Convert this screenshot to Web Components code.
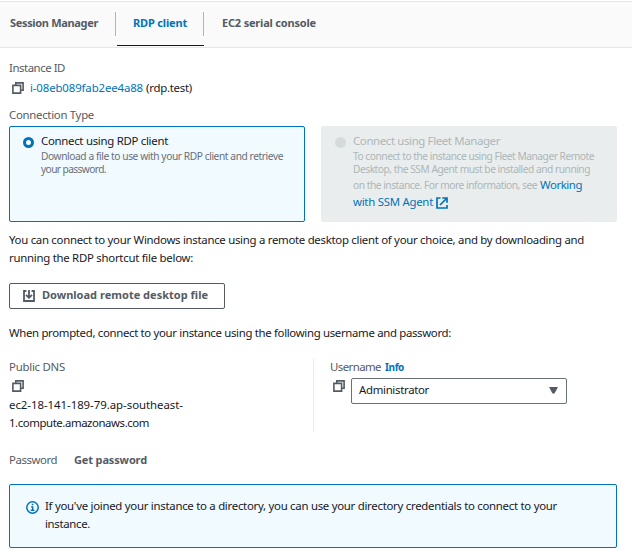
<!DOCTYPE html>
<html lang="en">
<head>
<meta charset="utf-8">
<title>Connect to instance</title>
<style>
html,body{margin:0;background:#fff}
body{width:632px;height:552px;overflow:hidden;font:11.4px/18px "Noto Sans","Open Sans",sans-serif;color:#16191f}
</style>
</head>
<body>
<rdp-page></rdp-page>
<script>
const define = (name, html, ready) => customElements.define(name, class extends HTMLElement {
  connectedCallback() {
    if (!this.shadowRoot) this.attachShadow({mode: 'open'}).innerHTML = html;
    if (ready) ready(this);
  }
});

// One line of text, tracked so that it spans the width in "w".
define('text-line', `<style>
:host{display:block;white-space:nowrap;flex:none;height:18px;line-height:var(--lh,19px)}
:host([muted]){color:#545b64}:host([link]){color:#0073bb}:host([bold]){font-weight:700;font-size:11px}
:host([small]){font-size:10.2px;height:13px;line-height:14px;color:#687078}
</style><span><slot></slot></span>`, el => {
  const span = el.shadowRoot.querySelector('span');
  const w = +el.getAttribute('w');
  el.style.width = w + 'px';
  const n = el.textContent.length;
  span.style.letterSpacing = ((w - span.getBoundingClientRect().width) / n).toFixed(4) + 'px';
});

define('copy-icon', `<style>:host{display:block;flex:none;width:12px;height:12px}svg{display:block}</style>
<svg width="12" height="12" fill="none" stroke="#545b64" stroke-width="1.6"><path d="M3.8 3.3V.9h7.3v7.3H8.7"/><path d="M.9 3.4h7.7v7.7H.9z"/></svg>`);

define('external-icon', `<style>:host{display:block;flex:none;width:12px;height:12px}svg{display:block}</style>
<svg width="12" height="12" fill="none" stroke="#0073bb" stroke-width="1.7"><path d="M4.5 1H1v10h10V8M6.2 1H11v4.8M11 1L4 8"/></svg>`);

define('download-icon', `<style>:host{display:block;flex:none;width:12px;height:12px}svg{display:block}</style>
<svg width="12" height="12" fill="none" stroke="#545b64" stroke-width="1.8"><path d="M3.4 1H1v10h10V1H8.6M6 0v7.5M3 4.8l3 3 3-3"/></svg>`);

define('info-icon', `<style>:host{display:block;flex:none;width:13px;height:13px}svg{display:block}</style>
<svg width="13" height="13" fill="none" stroke="#0073bb" stroke-width="1.5"><circle cx="6.5" cy="6.5" r="5.7"/><path d="M5 5.9h1.7v3.5M4.7 9.3h3.7M5.8 3.5h1.5" stroke-width="1.4"/></svg>`);

define('tab-bar', `<style>
:host{--lh:17px;display:flex;box-sizing:border-box;height:47px;margin-top:1px;border-top:1px solid #e4e7e7;border-bottom:1px solid #e4e7e7;background:#fafafa}
i{width:1px;height:24px;margin-top:10px;background:#aab7b8}
.a{padding:12px 17px 0 10px}.b{box-sizing:border-box;width:87px;height:44px;margin-left:1px;padding:12px 0 0 16px;border-bottom:1px solid #16191f}
.c{padding:12px 0 0 18px}i.r{margin-left:-1px}
</style>
<div class="a"><text-line bold muted w="88">Session Manager</text-line></div><i></i>
<div class="b"><text-line bold link w="54">RDP client</text-line></div><i class="r"></i>
<div class="c"><text-line bold muted w="94">EC2 serial console</text-line></div>`);

define('option-tile', `<style>
:host{display:flex;box-sizing:border-box;width:296px;height:96px;border:1px solid #0073bb;border-radius:2px;background:#f1faff;padding:4px 0 0 13px}
:host([disabled]){background:#eaeded;border-color:#eaeded}
b{box-sizing:border-box;flex:none;width:11px;height:11px;margin:6px 7px 0 0;border:3.5px solid #0073bb;border-radius:50%;background:#fff}
:host([disabled]) b{background:#d5dbdb;border-color:#d5dbdb}
</style><b></b><div><slot></slot></div>`);

define('ui-button', `<style>
:host{--lh:16px;display:flex;align-items:center;gap:7px;box-sizing:border-box;width:216px;height:26px;padding-left:13px;border:1px solid #545b64;border-radius:2px}
</style><download-icon></download-icon><slot></slot>`);

define('ui-select', `<style>
:host{--lh:16px;display:flex;align-items:center;justify-content:space-between;box-sizing:border-box;width:216px;height:26px;padding:0 8px 0 7px;border:1px solid #687078;border-radius:2px}
svg{display:block;margin-bottom:1px}
</style><slot></slot><svg width="9" height="7"><path d="M0 0h9L5.5 6.5h-2z" fill="#545b64"/></svg>`);

define('info-alert', `<style>
:host{display:flex;gap:6px;box-sizing:border-box;width:608px;height:64px;padding:11px 0 0 16px;border:1px solid #0073bb;border-radius:2px;background:#f1faff}
info-icon{margin-top:5px}
</style><info-icon></info-icon><div><slot></slot></div>`);

define('rdp-page', `<style>
:host{display:flow-root;background:#fff}
main{padding:10px 0 0 9px}
.row{display:flex}
.id{margin-top:2px;padding-left:3px}
.id copy-icon{margin:4px 6px 0 0}
.tiles{gap:16px;margin-top:3px}
.dis{color:#aab7b8}
.dis text-line[small]{color:#aab7b8}
.dns{margin-top:18px;height:72px;--lh:17px}
.left{box-sizing:border-box;width:305px;height:73px;border-right:1px solid #eaeded}
.left copy-icon{margin:4px 0 4px 3px}
.right{padding-left:16px}
</style>
<tab-bar></tab-bar>
<main>
<text-line muted w="56">Instance ID</text-line>
<div class="row id"><copy-icon></copy-icon><text-line link w="113">i-08eb089fab2ee4a88</text-line><text-line w="46" style="margin-left:3px">(rdp.test)</text-line></div>
<text-line muted w="85" style="margin-top:9px">Connection Type</text-line>
<div class="row tiles">
<option-tile><text-line w="127">Connect using RDP client</text-line><text-line small w="242">Download a file to use with your RDP client and retrieve</text-line><text-line small w="65">your password.</text-line></option-tile>
<option-tile disabled class="dis"><text-line w="147">Connect using Fleet Manager</text-line><text-line small w="241">To connect to the instance using Fleet Manager Remote</text-line><text-line small w="237">Desktop, the SSM Agent must be installed and running</text-line>
<div class="row"><text-line small w="184" style="height:18px;line-height:21px">on the instance. For more information, see</text-line><text-line link w="42" style="margin-left:3px">Working</text-line></div>
<div class="row"><text-line link w="80" style="line-height:18px">with SSM Agent</text-line><external-icon style="margin:4px 0 0 3px"></external-icon></div></option-tile>
</div>
<text-line w="575" style="margin-top:8px">You can connect to your Windows instance using a remote desktop client of your choice, and by downloading and</text-line>
<text-line w="184">running the RDP shortcut file below:</text-line>
<ui-button style="margin-top:17px"><text-line bold muted w="166">Download remote desktop file</text-line></ui-button>
<text-line w="442" style="margin-top:14px">When prompted, connect to your instance using the following username and password:</text-line>
<div class="row dns">
<div class="left"><text-line muted w="56" style="margin-top:-1px">Public DNS</text-line><copy-icon></copy-icon><text-line w="174">ec2-18-141-189-79.ap-southeast-</text-line><text-line w="140">1.compute.amazonaws.com</text-line></div>
<div class="right"><div class="row" style="margin-top:-1px"><text-line muted w="51">Username</text-line><text-line bold link w="19" style="margin-left:4px;font-size:10px;line-height:19px">Info</text-line></div>
<div class="row" style="padding:2px 0 0 3px"><copy-icon style="margin:2px 6px 0 0"></copy-icon><ui-select><text-line w="70">Administrator</text-line></ui-select></div></div>
</div>
<div class="row" style="margin-top:19px"><text-line muted w="48">Password</text-line><text-line bold muted w="73" style="margin-left:17px">Get password</text-line></div>
<info-alert style="margin-top:16px"><text-line w="512">If you've joined your instance to a directory, you can use your directory credentials to connect to your</text-line><text-line w="45">instance.</text-line></info-alert>
</main>`);
</script>
</body>
</html>
